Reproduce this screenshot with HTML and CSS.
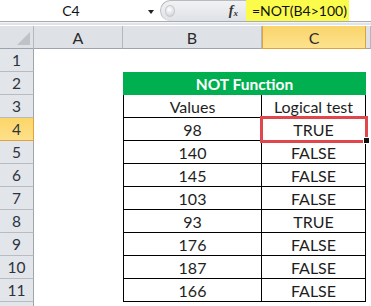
FILE: index.html
```html
<!DOCTYPE html>
<html lang="en">
<head>
  <meta charset="UTF-8">
  <title>NOT Function</title>
  <link rel="stylesheet" href="styles.css">
</head>
<body>

<div class="formula-bar">
  <div class="name-box">
    <span class="cell-ref">C4</span>
    <span class="caret"></span>
  </div>
  <div class="fx-area">
    <span class="knob"></span>
    <span class="fx">f<sub>x</sub></span>
  </div>
  <div class="formula">
    <span class="formula-text">=NOT(B4&gt;100)</span>
  </div>
</div>
<div class="bar-gap"></div>

<div class="sheet">
  <div class="corner"><span class="corner-tri"></span></div>
  <div class="col-head">A</div>
  <div class="col-head">B</div>
  <div class="col-head active">C</div>
  <div class="col-head"></div>

  <div class="row-head">1</div>
  <div class="cell"></div><div class="cell"></div><div class="cell"></div><div class="cell"></div>

  <div class="row-head">2</div>
  <div class="cell"></div>
  <div class="title">NOT Function</div>
  <div class="cell"></div>

  <div class="row-head">3</div>
  <div class="cell"></div>
  <div class="t first">Values</div>
  <div class="t">Logical test</div>
  <div class="cell"></div>

  <div class="row-head active">4</div>
  <div class="cell"></div>
  <div class="t first">98</div>
  <div class="t selected">TRUE</div>
  <div class="cell"></div>

  <div class="row-head">5</div>
  <div class="cell"></div>
  <div class="t first">140</div>
  <div class="t">FALSE</div>
  <div class="cell"></div>

  <div class="row-head">6</div>
  <div class="cell"></div>
  <div class="t first">145</div>
  <div class="t">FALSE</div>
  <div class="cell"></div>

  <div class="row-head">7</div>
  <div class="cell"></div>
  <div class="t first">103</div>
  <div class="t">FALSE</div>
  <div class="cell"></div>

  <div class="row-head">8</div>
  <div class="cell"></div>
  <div class="t first">93</div>
  <div class="t">TRUE</div>
  <div class="cell"></div>

  <div class="row-head">9</div>
  <div class="cell"></div>
  <div class="t first">176</div>
  <div class="t">FALSE</div>
  <div class="cell"></div>

  <div class="row-head">10</div>
  <div class="cell"></div>
  <div class="t first">187</div>
  <div class="t">FALSE</div>
  <div class="cell"></div>

  <div class="row-head">11</div>
  <div class="cell"></div>
  <div class="t first">166</div>
  <div class="t">FALSE</div>
  <div class="cell"></div>

  <div class="row-head last"></div>
</div>

</body>
</html>
```

FILE: styles.css
```css
* {
  margin: 0;
  padding: 0;
  box-sizing: border-box;
}

body {
  width: 371px;
  height: 306px;
  overflow: hidden;
  background: #ffffff;
  font-family: 'Lato', 'Liberation Sans', sans-serif;
  color: #222;
}

/* Formula bar */
.formula-bar {
  display: flex;
  height: 22px;
  border-bottom: 1px solid #a7abb0;
  background: #ffffff;
}

.name-box {
  width: 160px;
  display: flex;
  align-items: center;
  padding-right: 6px;
}

.cell-ref {
  flex: 1;
  text-align: center;
  font-size: 14px;
  color: #111;
  padding-right: 6px;
}

.caret {
  width: 0;
  height: 0;
  border-left: 3.5px solid transparent;
  border-right: 3.5px solid transparent;
  border-top: 4px solid #222;
  margin-top: 2px;
}

.fx-area {
  width: 86px;
  display: flex;
  align-items: center;
  justify-content: space-between;
  padding: 0 8px 0 2px;
  background: linear-gradient(#f1f2f4, #dfe2e6);
  border: 1px solid #b7bbc0;
  border-right: none;
  border-bottom: none;
  border-radius: 11px 0 0 11px;
}

.knob {
  width: 10px;
  height: 12px;
  border-radius: 50%;
  background: radial-gradient(circle at 40% 35%, #ffffff, #c9ccd1);
  border: 1px solid #c4c7cc;
  margin-left: 2px;
}

.fx {
  font-family: 'Liberation Serif', serif;
  font-style: italic;
  font-weight: bold;
  font-size: 14px;
  color: #333;
}

.fx sub {
  font-size: 9px;
  vertical-align: -1px;
}

.formula {
  flex: 1;
  display: flex;
}

.formula-text {
  width: 103px;
  background: #fbfb4b;
  font-size: 14px;
  line-height: 21px;
  padding-left: 6px;
  color: #111;
}

.bar-gap {
  height: 4px;
  border-top: 1px solid #f4f5f6;
  background: #dfe2e6;
  border-bottom: 1px solid #ffffff;
}

/* Sheet grid */
.sheet {
  display: grid;
  grid-template-columns: 34px 89px 139px 104px 1fr;
  grid-template-rows: 23px;
  grid-auto-rows: 23px;
  height: 280px;
  overflow: hidden;
}

.corner,
.col-head {
  background: #dee2e7;
  border-right: 1px solid #b4b8be;
  border-bottom: 1px solid #9fa4ab;
}

.corner {
  position: relative;
}

.corner-tri {
  position: absolute;
  right: 3px;
  bottom: 3px;
  width: 0;
  height: 0;
  border-left: 13px solid transparent;
  border-bottom: 13px solid #bfc3c8;
}

.col-head {
  display: flex;
  align-items: center;
  justify-content: center;
  font-size: 16px;
  color: #2b2b2b;
}

.col-head.active {
  background: linear-gradient(#f9d46b, #fde28e);
  border: 1px solid #e0a23c;
  border-top: none;
}

.row-head {
  display: flex;
  align-items: center;
  justify-content: center;
  background: #e2e5e9;
  border-right: 1px solid #9fa4ab;
  border-bottom: 1px solid #b8bcc1;
  font-size: 15.5px;
  color: #2d3440;
}

.row-head.active {
  background: linear-gradient(#fcd567, #fde08a);
  border-bottom-color: #e0a23c;
  border-right-color: #e0a23c;
}

.cell {
  background: #ffffff;
}

.title {
  grid-column: span 2;
  background: #00b050;
  color: #ffffff;
  font-weight: bold;
  font-size: 15.5px;
  display: flex;
  align-items: center;
  justify-content: center;
  padding-top: 1px;
}

.t {
  display: flex;
  align-items: center;
  justify-content: center;
  font-size: 16px;
  color: #1e1e1e;
  border-right: 1px solid #000;
  border-bottom: 1px solid #000;
  padding-top: 1px;
}

.t.first {
  border-left: 1px solid #000;
}

.t.selected {
  position: relative;
  outline: 3px solid #e0474c;
  outline-offset: -1px;
}

.t.selected::after {
  content: '';
  position: absolute;
  right: -5px;
  bottom: -4px;
  width: 5px;
  height: 5px;
  background: #111;
  border: 1px solid #ffffff;
}
```
